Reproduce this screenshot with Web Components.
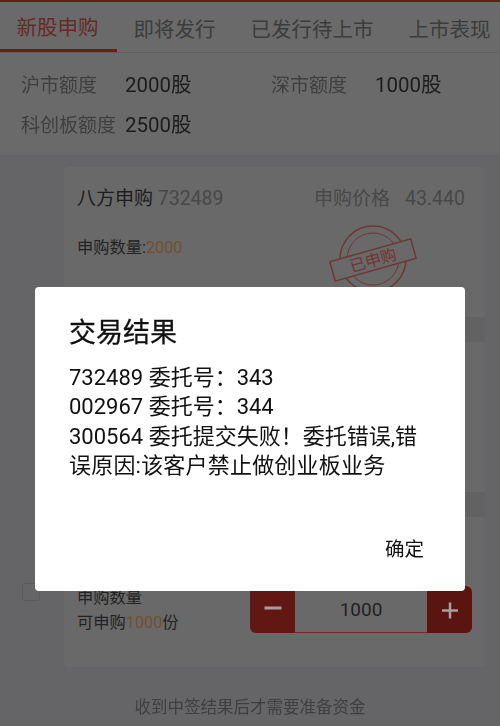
<!DOCTYPE html>
<html lang="zh">
<head>
<meta charset="utf-8">
<style>
  html, body { margin: 0; padding: 0; height: 100%; overflow: hidden; }
  body { background: #656567; font-family: "Roboto", "Noto Sans CJK SC", sans-serif; }
</style>
</head>
<body>
<ipo-page></ipo-page>
<result-dialog></result-dialog>

<script>
const FONT = '"Roboto", "Noto Sans CJK SC", sans-serif';

class TabBar extends HTMLElement {
  connectedCallback() {
    const root = this.attachShadow({ mode: 'open' });
    root.innerHTML = `
    <style>
      :host { display: flex; height: 50px; overflow: hidden; background: #6a6a6a; border-bottom: 1px solid #5f5f5f; font: 20.5px ${FONT}; color: #3c3c3c; }
      div { flex: none; display: flex; align-items: center; padding: 1px 18.5px 0 16.5px; height: 50px; box-sizing: border-box; white-space: nowrap; }
      .on { color: #652a26; border-bottom: 3px solid #6f1b16; }
    </style>
    <div class="on">新股申购</div>
    <div>即将发行</div>
    <div>已发行待上市</div>
    <div>上市表现</div>`;
  }
}

class QuotaPanel extends HTMLElement {
  connectedCallback() {
    const root = this.attachShadow({ mode: 'open' });
    root.innerHTML = `
    <style>
      :host { display: grid; grid-template-columns: 104px 146px 104px 1fr; grid-auto-rows: 39.5px; align-items: center; height: 102px; padding: 13px 0 0 21px; box-sizing: border-box; background: #6a6a6a; font: 19px/39px ${FONT}; }
      .k { color: #3f3f3f; white-space: nowrap; }
      .v { color: #1c1c1c; font-size: 20.5px; white-space: nowrap; }
    </style>
    <span class="k">沪市额度</span><span class="v">2000股</span>
    <span class="k">深市额度</span><span class="v">1000股</span>
    <span class="k">科创板额度</span><span class="v">2500股</span>`;
  }
}

// 一行：左边复选框 + 卡片
class IpoCard extends HTMLElement {
  connectedCallback() {
    const root = this.attachShadow({ mode: 'open' });
    const check = this.hasAttribute('check') ? '<span class="check"></span>' : '';
    root.innerHTML = `
    <style>
      :host { display: flex; align-items: center; height: 150px; color: #232323; font: 16.25px ${FONT}; }
      .side { flex: none; width: 64px; box-sizing: border-box; padding-left: 22px; }
      .check { display: block; width: 18px; height: 18px; box-sizing: border-box; border: 1.5px solid #5b5b5b; border-radius: 3px; }
      .card { flex: 1; position: relative; height: 150px; box-sizing: border-box; padding: 0 13px; background: #696969; border-radius: 3px; }
    </style>
    <div class="side">${check}</div>
    <div class="card"><slot></slot></div>`;
  }
}

class CardHead extends HTMLElement {
  connectedCallback() {
    const root = this.attachShadow({ mode: 'open' });
    root.innerHTML = `
    <style>
      :host { display: flex; justify-content: space-between; padding: 18px 7px 0 0; line-height: 28px; font-size: 19px; color: #1d1d1d; }
      .code, .price { color: #484848; }
      .num { font-size: 19.5px; }
      .num.val { margin-left: 15px; }
    </style>
    <span>八方申购 <span class="code num">732489</span></span>
    <span class="price">申购价格<span class="num val">43.440</span></span>`;
  }
}

class DoneStamp extends HTMLElement {
  connectedCallback() {
    const root = this.attachShadow({ mode: 'open' });
    root.innerHTML = `
    <style>
      :host { position: absolute; left: 264px; top: 59px; width: 90px; height: 72px; }
      svg { display: block; overflow: visible; }
    </style>
    <svg width="90" height="72" viewBox="0 0 90 72" fill="none" stroke="#6b3835">
      <circle cx="45" cy="33" r="33" stroke-width="1.5"/>
      <circle cx="45" cy="33" r="26" stroke-width="1"/>
      <g transform="rotate(-15.8 45 34)">
        <rect x="3" y="24" width="84" height="20" fill="#696969" stroke-width="1.5"/>
        <text x="45" y="40" text-anchor="middle" font-size="16" fill="#733431" stroke="none" font-family="Noto Sans CJK SC, sans-serif">已申购</text>
      </g>
    </svg>`;
  }
}

class QtyStepper extends HTMLElement {
  connectedCallback() {
    const root = this.attachShadow({ mode: 'open' });
    root.innerHTML = `
    <style>
      :host { display: flex; width: 222px; height: 47px; font: 19px ${FONT}; color: #222; }
      .btn { flex: none; width: 45px; display: flex; align-items: center; justify-content: center; background: #621712; border-radius: 6px 0 0 6px; }
      .btn.plus { background: #5a1511; border-radius: 0 6px 6px 0; }
      .input { flex: 1; box-sizing: border-box; border-bottom: 1.5px solid #752a25; display: flex; align-items: center; justify-content: center; padding-top: 1px; }
      svg { display: block; }
    </style>
    <span class="btn"><svg width="18" height="18" viewBox="0 0 18 18"><path d="M.5 7h17" stroke="#a89f9e" stroke-width="3"/></svg></span>
    <span class="input">1000</span>
    <span class="btn plus"><svg width="18" height="18" viewBox="0 0 18 18" fill="none" stroke="#a89f9e" stroke-width="2.5"><path d="M1 9.5h16M9 1.5v16"/></svg></span>`;
  }
}

class IpoPage extends HTMLElement {
  connectedCallback() {
    const root = this.attachShadow({ mode: 'open' });
    root.innerHTML = `
    <style>
      :host { display: block; height: 726px; overflow: hidden; border-top: 2px solid #6f1b16; box-sizing: border-box; filter: blur(.4px); }
      .list { display: flex; flex-direction: column; gap: 25px; margin: 12px 15px 0 0; background: linear-gradient(90deg, transparent 64px, #626263 64px); }
      .qty { margin-top: 23px; line-height: 24px; }
      em { font-style: normal; color: #744f30; }
      .order { display: flex; justify-content: space-between; padding-top: 68px; line-height: 25px; }
      .order qty-stepper { margin-top: 1px; }
      .note { text-align: center; color: #3f3f3f; font: 16.5px ${FONT}; margin-top: 27px; }
    </style>
    <tab-bar></tab-bar>
    <quota-panel></quota-panel>
    <div class="list">
      <ipo-card>
        <card-head></card-head>
        <div class="qty">申购数量:<em>2000</em></div>
        <done-stamp></done-stamp>
      </ipo-card>
      <ipo-card></ipo-card>
      <ipo-card check>
        <div class="order">
          <div>申购数量<br>可申购<em>1000</em>份</div>
          <qty-stepper></qty-stepper>
        </div>
      </ipo-card>
    </div>
    <div class="note">收到中签结果后才需要准备资金</div>`;
  }
}

class ResultDialog extends HTMLElement {
  connectedCallback() {
    const root = this.attachShadow({ mode: 'open' });
    root.innerHTML = `
    <style>
      :host { position: fixed; left: 35px; top: 287px; width: 430px; height: 304px; display: flex; flex-direction: column; background: #fff; border-radius: 4px; box-sizing: border-box; padding: 28px 34px 26px; color: #111; font: 22px/29.4px ${FONT}; filter: blur(.3px); }
      h2 { margin: 0 0 12px; font: 400 27px/36px ${FONT}; color: #111; -webkit-text-stroke: .3px #111; }
      .wide { letter-spacing: .2px; }
      .ok { margin: auto 7px 0 auto; font-size: 19.5px; line-height: 30px; }
    </style>
    <h2>交易结果</h2>
    <div>732489 委托号：343</div>
    <div>002967 委托号：344</div>
    <div>300564 委托提交失败！委托错误,错</div>
    <div class="wide">误原因:该客户禁止做创业板业务</div>
    <span class="ok">确定</span>`;
  }
}

customElements.define('tab-bar', TabBar);
customElements.define('quota-panel', QuotaPanel);
customElements.define('ipo-card', IpoCard);
customElements.define('card-head', CardHead);
customElements.define('done-stamp', DoneStamp);
customElements.define('qty-stepper', QtyStepper);
customElements.define('ipo-page', IpoPage);
customElements.define('result-dialog', ResultDialog);
</script>
</body>
</html>
